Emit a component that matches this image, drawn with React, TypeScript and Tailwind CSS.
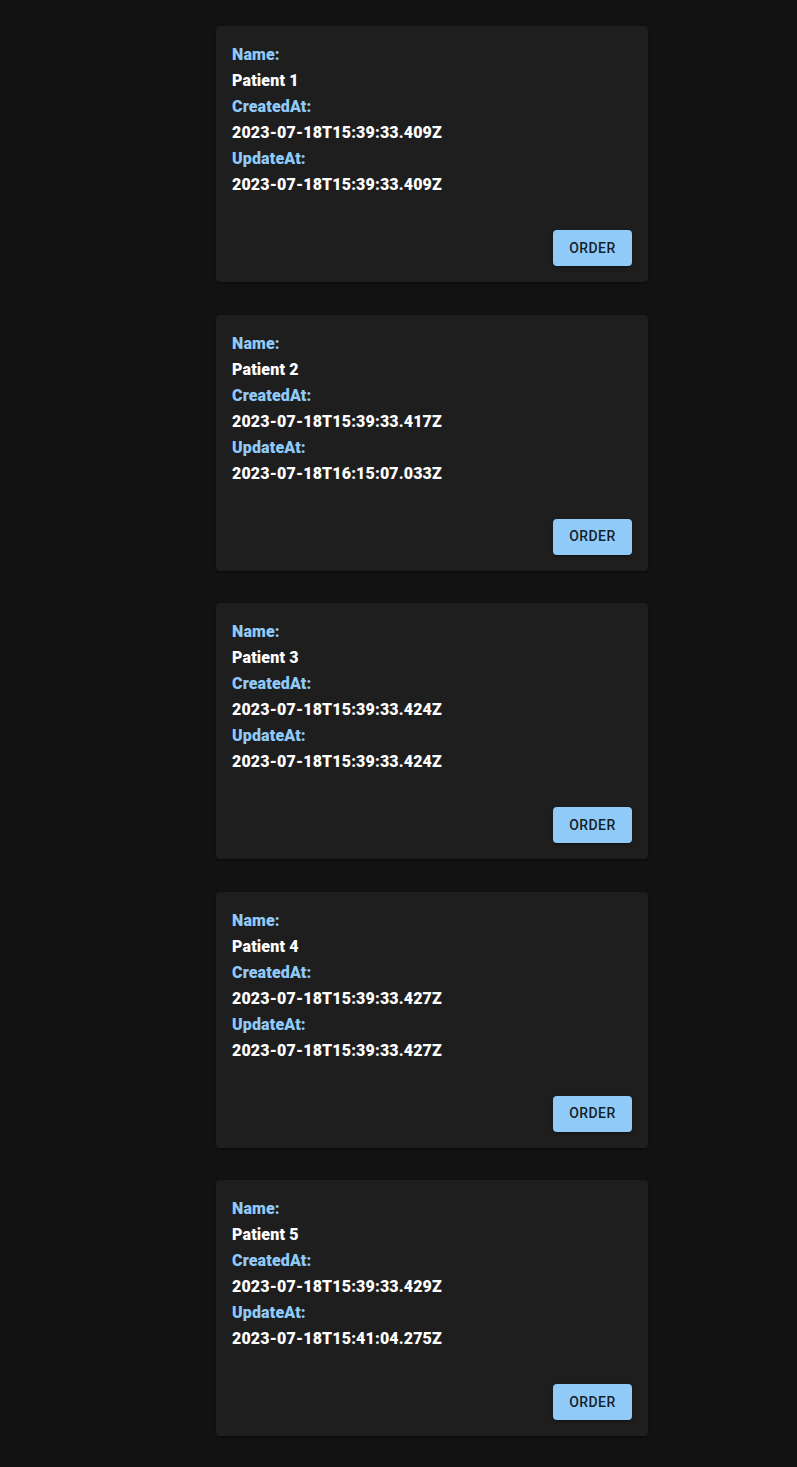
import React from "react";

const patients = [
  { name: "Patient 1", created: "2023-07-18T15:39:33.409Z", updated: "2023-07-18T15:39:33.409Z" },
  { name: "Patient 2", created: "2023-07-18T15:39:33.417Z", updated: "2023-07-18T16:15:07.033Z" },
  { name: "Patient 3", created: "2023-07-18T15:39:33.424Z", updated: "2023-07-18T15:39:33.424Z" },
  { name: "Patient 4", created: "2023-07-18T15:39:33.427Z", updated: "2023-07-18T15:39:33.427Z" },
  { name: "Patient 5", created: "2023-07-18T15:39:33.429Z", updated: "2023-07-18T15:41:04.275Z" },
];

function Card({ p }: { p: (typeof patients)[number] }) {
  return (
    <div className="w-[432px] rounded-[4px] bg-[#1e1e1e] shadow-[0_2px_1px_-1px_rgba(0,0,0,0.2),0_1px_1px_0_rgba(0,0,0,0.14),0_1px_3px_0_rgba(0,0,0,0.12)] px-4 pt-4 pb-4 flex flex-col">
      <div className="flex flex-col text-[16px] leading-[26px] font-black tracking-[0.15px]">
        <div className="text-[#90caf9]">Name:</div>
        <div className="text-white">{p.name}</div>
        <div className="text-[#90caf9]">CreatedAt:</div>
        <div className="text-white">{p.created}</div>
        <div className="text-[#90caf9]">UpdateAt:</div>
        <div className="text-white">{p.updated}</div>
      </div>
      <div className="mt-8 flex justify-end">
        <button className="h-9 w-[79px] rounded-[4px] bg-[#90caf9] text-[14px] font-medium uppercase tracking-[0.4px] text-[rgba(0,0,0,0.87)] shadow-[0_3px_1px_-2px_rgba(0,0,0,0.2),0_2px_2px_0_rgba(0,0,0,0.14),0_1px_5px_0_rgba(0,0,0,0.12)]">
          Order
        </button>
      </div>
    </div>
  );
}

export default function App() {
  return (
    <div
      className="min-h-[1467px] bg-[#121212] pt-[26px] pb-[31px]"
      style={{ fontFamily: "Roboto, 'Liberation Sans', sans-serif" }}
    >
      <div className="ml-[216px] flex flex-col gap-[32.5px]">
        {patients.map((p) => (
          <Card key={p.name} p={p} />
        ))}
      </div>
    </div>
  );
}
